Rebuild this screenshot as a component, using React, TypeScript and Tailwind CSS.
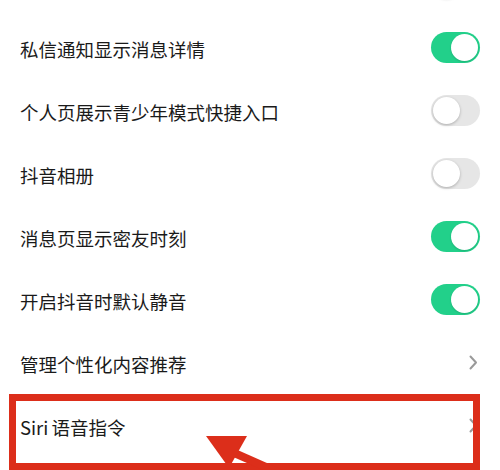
import React from "react";

type Item = { label: React.ReactNode; kind: "on" | "off" | "chev" };

const items: Item[] = [
  { label: "", kind: "off" },
  { label: "私信通知显示消息详情", kind: "on" },
  { label: "个人页展示青少年模式快捷入口", kind: "off" },
  { label: "抖音相册", kind: "off" },
  { label: "消息页显示密友时刻", kind: "on" },
  { label: "开启抖音时默认静音", kind: "on" },
  { label: "管理个性化内容推荐", kind: "chev" },
  {
    label: (
      <>
        Siri<span className="ml-[3px]">语音指令</span>
      </>
    ),
    kind: "chev",
  },
];

function Toggle({ on }: { on: boolean }) {
  return on ? (
    <div className="w-[49px] h-[31px] rounded-full bg-[#22d08a] flex items-center justify-end pr-[2px]">
      <div className="w-[27px] h-[27px] rounded-full bg-white shadow-[0_1px_2px_rgba(0,0,0,0.15)]" />
    </div>
  ) : (
    <div className="w-[49px] h-[31px] rounded-full bg-[#e6e6e6] flex items-center justify-start pl-[2px]">
      <div className="w-[27px] h-[27px] rounded-full bg-white shadow-[0_1px_3px_rgba(0,0,0,0.25)]" />
    </div>
  );
}

function Chevron() {
  return (
    <svg width="9" height="15" viewBox="0 0 9 15" fill="none">
      <path d="M1.5 1.5L7 7.5L1.5 13.5" stroke="#9a9a9a" strokeWidth="2" strokeLinecap="round" strokeLinejoin="round" />
    </svg>
  );
}

export default function App() {
  return (
    <div
      className="relative w-[500px] h-[470px] overflow-hidden bg-white text-[#1a1a1a]"
      style={{ fontFamily: '"Noto Sans CJK SC", "Noto Sans", sans-serif' }}
    >
      <div className="-mt-[47px] flex flex-col">
        {items.map((it, i) => (
          <div
            key={i}
            className={`h-[63px] flex items-center justify-between pl-5 ${it.kind === "chev" ? "pr-[22px]" : "pr-5"}`}
          >
            <span className="text-[18.5px] leading-none pt-[3px]">{it.label}</span>
            {it.kind === "chev" ? <Chevron /> : <Toggle on={it.kind === "on"} />}
          </div>
        ))}
      </div>

      {/* red highlight box */}
      <div className="absolute left-[9px] top-[394px] w-[471px] h-[76px] border-[7px] border-[#dc2e1a]" />

      {/* arrow */}
      <svg className="absolute left-0 top-0" width="500" height="470" viewBox="0 0 500 470">
        <line x1="232" y1="452" x2="300" y2="482" stroke="#dc2e1a" strokeWidth="8" />
        <polygon points="206,436 247,436 229,468" fill="#dc2e1a" />
      </svg>
    </div>
  );
}
